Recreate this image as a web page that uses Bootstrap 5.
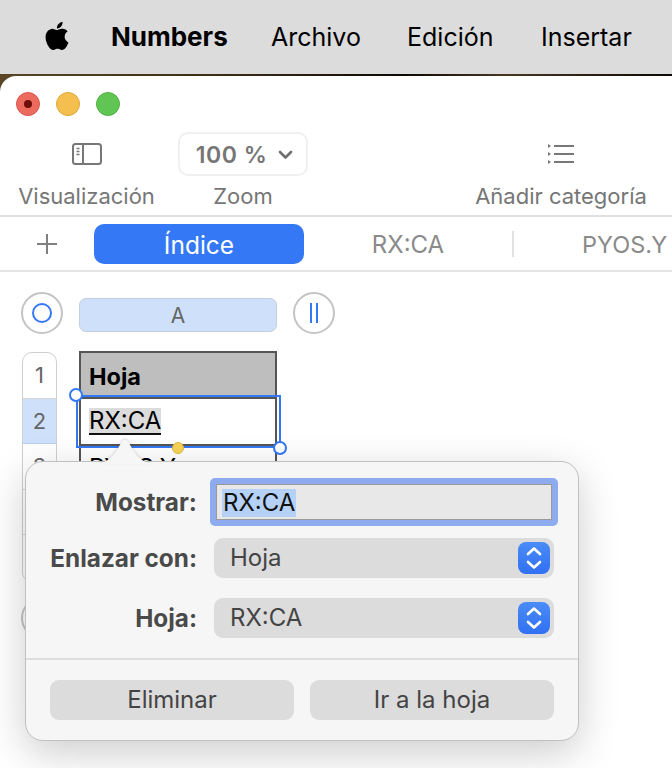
<!DOCTYPE html>
<html lang="es">
<head>
<meta charset="utf-8">
<title>Numbers</title>
<link rel="stylesheet" href="https://cdn.jsdelivr.net/npm/bootstrap@5.3.0/dist/css/bootstrap.min.css">
<style>
html,body{margin:0;background:#fff;}
body{width:672px;height:768px;overflow:hidden;position:relative;font-family:"Inter","Liberation Sans",sans-serif;color:#000;}
.menubar{height:74px;background:#dcdcdc;padding-left:43px;font-size:25px;line-height:1;}
.menubar .apple{width:28px;height:32px;margin-right:40px;margin-top:-3px;}
.menubar .app{font-weight:700;width:160px;font-size:26px;}
.menubar .m1{width:136px;}
.menubar .m2{width:134px;}
.strip{height:3px;background:linear-gradient(90deg,#5a4526 0,#3a2a14 35%,#0c0805 60%,#4a3620 75%,#0c0805 100%);}
.winwrap{background:#5a4526;margin-top:-1px;}
.win{background:#fff;border-top-left-radius:16px;height:692px;}
.lights{height:56px;padding:0 0 0 16px;gap:16px;}
.dot{width:24px;height:24px;border-radius:50%;}
.dot.r{background:#ec6a5e;border:1px solid #d8574c;}
.dot.y{background:#f5bf4f;border:1px solid #dfa73c;}
.dot.g{background:#61c554;border:1px solid #52b046;}
.dot.r::after{content:"";width:8px;height:8px;border-radius:50%;background:#6e0f0a;}
.toolbar{height:85px;border-bottom:2px solid #e0e0e0;font-size:22px;color:#767676;line-height:1;}
.tool1{width:137px;margin-left:18px;}
.tool2{width:130px;margin-left:23px;}
.tool3{width:172px;margin-left:167px;}
.tbtop{height:43px;}
.tblab{margin-top:10px;white-space:nowrap;}
.tblab2{margin-top:9px;white-space:nowrap;}
.zoompill{width:130px;height:44px;border:2px solid #f0f0f0;border-radius:10px;font-size:23px;font-weight:600;color:#767676;gap:11px;padding:2px 0 0 3px;letter-spacing:.5px;}
.tabs{height:55px;border-bottom:2px solid #e4e4e4;font-size:24px;color:#8a8a8a;white-space:nowrap;overflow:hidden;padding-top:1px;}
.plus{width:94px;}
.tabon{width:210px;height:40px;background:#3478f6;color:#fff;border-radius:10px;font-size:24.5px;padding-top:2px;}
.tabb{width:208px;padding-top:2px;}
.tabsep{width:2px;height:26px;background:#e2e2e2;}
.tabc{padding-left:68px;padding-top:2px;font-size:23.5px;}
.sheet{padding:20px 0 0 21px;}
.round{width:42px;height:42px;border-radius:50%;border:2px solid #c4c4c4;background:#fff;flex:none;}
.coltop{gap:16px;height:42px;}
.colhead{width:198px;height:34px;background:#cfe1fa;border:1px solid #c4cedc;border-radius:7px;color:#666;font-size:21px;margin-top:4px;padding-top:2px;}
.rowarea{margin-top:18px;gap:22px;}
.rowheads{width:35px;height:229px;border:1px solid #cfcfcf;border-radius:10px 10px 8px 8px;font-size:22px;color:#666;overflow:hidden;flex:none;margin-left:1px;}
.rowheads div{height:45.5px;border-bottom:1px solid #d4d4d4;padding-top:1px;}
.rowheads .act{background:#cfe1fa;border-bottom-color:#b9d0ee;}
.grid{width:198px;border:2px solid #555;border-bottom:0;margin-top:-1px;font-size:24px;height:230px;}
.grid>div{padding-left:8px;border-bottom:2px solid #555;}
.ghead{height:46px;background:#bebebe;font-weight:700;font-size:23.5px;padding-top:4px;}
.grow{height:47px;}
.grow3{height:46px;}
.linked{background:#dcdcdc;border-bottom:2px solid #111;line-height:26px;height:27px;}
.under{text-decoration:underline;}
.selbox{position:absolute;left:76px;top:395px;width:205px;height:53px;border:2px solid #3478f6;}
.handle{position:absolute;width:14px;height:14px;border-radius:50%;background:#fff;border:2.5px solid #3478f6;}
.h1{left:69px;top:388px;}
.h2{left:273px;top:441px;}
.h3{left:172px;top:442px;width:12px;height:12px;background:#f5d456;border:1px solid #dcb946;}
.lowround{position:absolute;left:21px;top:597px;}
.pop{position:absolute;left:25px;top:461px;width:554px;height:280px;background:#f6f6f6;border-radius:18px;border:1px solid #c0c0c0;box-shadow:0 12px 40px rgba(0,0,0,.2);font-size:24px;color:#444;}
.tail{position:absolute;left:70px;top:-26px;width:58px;height:28px;filter:drop-shadow(0 -1px 1px rgba(0,0,0,.15));}
.frm{padding:16px 0 0 0;}
.lab{width:171px;text-align:right;font-weight:700;font-size:24.3px;color:#4a4a4a;flex:none;white-space:nowrap;}
.frow1{height:48px;}
.inpt{width:348px;height:48px;margin-left:13px;border:6px solid #8fabf0;border-radius:5px;background:#e8e8e8;box-shadow:inset 0 0 0 1px #9a9a9a;color:#111;padding:1px 0 0 6px;}
.seltxt{background:#b5d1f8;line-height:28px;padding:0 1px;}
.frow2{height:40px;margin-top:12px;}
.frow3{height:40px;margin-top:20px;}
.sel{width:340px;height:40px;margin-left:17px;background:#dcdcdc;border-radius:9px;padding:0 4px 0 16px;}
.step{width:32px;height:32px;border-radius:8px;background:linear-gradient(#4a8cf7,#3170f3);}
.sep{height:2px;background:#dedede;margin-top:20px;}
.btns{padding:20px 24px 0 24px;gap:16px;}
.mbtn{width:244px;height:40px;background:#dcdcdc;border-radius:9px;color:#444;}
</style>
</head>
<body>
<div class="menubar d-flex align-items-center">
  <svg class="apple" viewBox="0 0 16 16" fill="#000"><path d="M11.182.008C11.148-.03 9.923.023 8.857 1.18c-1.066 1.156-.902 2.482-.878 2.516.024.034 1.52.087 2.475-1.258.955-1.345.762-2.391.728-2.43Zm3.314 11.733c-.048-.096-2.325-1.234-2.113-3.422.212-2.189 1.675-2.789 1.698-2.854.023-.065-.597-.79-1.254-1.157a3.692 3.692 0 0 0-1.563-.434c-.108-.003-.483-.095-1.254.116-.508.139-1.653.589-1.968.607-.316.018-1.256-.522-2.267-.665-.647-.125-1.333.131-1.824.328-.49.196-1.422.754-2.074 2.237-.652 1.482-.311 3.83-.067 4.56.244.729.625 1.924 1.273 2.796.576.984 1.34 1.667 1.659 1.899.319.232 1.219.386 1.843.067.502-.308 1.408-.485 1.766-.472.357.013 1.061.154 1.782.539.571.197 1.111.115 1.652-.105.541-.221 1.324-1.059 2.238-2.758.347-.79.505-1.217.473-1.282Z"/></svg>
  <span class="app">Numbers</span><span class="m1">Archivo</span><span class="m2">Edición</span><span>Insertar</span>
</div>
<div class="strip"></div>
<div class="winwrap">
<div class="win">
  <div class="lights d-flex align-items-center">
    <span class="dot r d-flex align-items-center justify-content-center"></span><span class="dot y"></span><span class="dot g"></span>
  </div>
  <div class="toolbar d-flex">
    <div class="tool1 text-center">
      <div class="tbtop d-flex align-items-center justify-content-center">
        <svg width="30" height="24" viewBox="0 0 30 24" fill="none" stroke="#777" stroke-width="2"><rect x="1" y="2" width="28" height="20" rx="2.5"/><path d="M11 2v20"/><path d="M4.500 6.500h3M4.500 9.500h3M4.500 12.500h3" stroke-width="1.400"/></svg>
      </div>
      <div class="tblab">Visualización</div>
    </div>
    <div class="tool2 text-center">
      <div class="zoompill d-flex align-items-center justify-content-center"><span>100 %</span>
        <svg width="15" height="10" viewBox="0 0 15 10" fill="none" stroke="#6f6f6f" stroke-width="2.600" stroke-linecap="round" stroke-linejoin="round"><path d="M2 2l5.500 5.500L13 2"/></svg>
      </div>
      <div class="tblab2">Zoom</div>
    </div>
    <div class="tool3 text-center">
      <div class="tbtop d-flex align-items-center justify-content-center">
        <svg width="28" height="22" viewBox="0 0 28 22" fill="#777"><rect x="7" y="2" width="20" height="2"/><rect x="7" y="10" width="20" height="2"/><rect x="7" y="18" width="20" height="2"/><path d="M1 1l3 2-3 2zM1 9l3 2-3 2zM1 17l3 2-3 2z"/></svg>
      </div>
      <div class="tblab">Añadir categoría</div>
    </div>
  </div>
  <div class="tabs d-flex align-items-center">
    <div class="plus d-flex justify-content-center"><svg width="22" height="22" viewBox="0 0 22 22" stroke="#808080" stroke-width="2"><path d="M11 1v20M1 11h20"/></svg></div>
    <div class="tabon d-flex align-items-center justify-content-center">Índice</div>
    <div class="tabb text-center">RX:CA</div>
    <div class="tabsep"></div>
    <div class="tabc">PYOS.Y</div>
  </div>
  <div class="sheet">
    <div class="coltop d-flex align-items-center">
      <div class="round d-flex align-items-center justify-content-center"><svg width="20" height="20" viewBox="0 0 20 20" fill="none" stroke="#3478f6" stroke-width="2"><circle cx="10" cy="10" r="9"/></svg></div>
      <div class="colhead d-flex align-items-center justify-content-center">A</div>
      <div class="round d-flex align-items-center justify-content-center"><svg width="10" height="20" viewBox="0 0 10 20" stroke="#3478f6" stroke-width="2"><path d="M2 0v20M8 0v20"/></svg></div>
    </div>
    <div class="rowarea d-flex">
      <div class="rowheads">
        <div class="d-flex align-items-center justify-content-center">1</div>
        <div class="act d-flex align-items-center justify-content-center">2</div>
        <div class="d-flex align-items-center justify-content-center">3</div>
        <div class="d-flex align-items-center justify-content-center">4</div>
        <div class="d-flex align-items-center justify-content-center">5</div>
      </div>
      <div class="grid">
        <div class="ghead d-flex align-items-center">Hoja</div>
        <div class="grow d-flex align-items-center"><span class="linked">RX:CA</span></div>
        <div class="grow3 d-flex align-items-center"><span class="under">PYOS.Y</span></div>
      </div>
    </div>
  </div>
</div>
</div>
<div class="selbox"></div>
<span class="handle h1"></span><span class="handle h2"></span><span class="handle h3"></span>
<div class="round lowround"></div>
<div class="pop">
  <svg class="tail" viewBox="0 0 58 28"><path d="M0 28C14 27 20 16 25.500 6c1.500-3 5.500-3 7 0C38 16 44 27 58 28z" fill="#f6f6f6"/></svg>
  <div class="frm">
    <div class="frow1 d-flex align-items-center"><span class="lab">Mostrar:</span>
      <div class="inpt d-flex align-items-center"><span class="seltxt">RX:CA</span></div></div>
    <div class="frow2 d-flex align-items-center"><span class="lab">Enlazar con:</span>
      <div class="sel d-flex align-items-center justify-content-between"><span>Hoja</span>
        <span class="step d-flex align-items-center justify-content-center"><svg width="16" height="24" viewBox="0 0 16 24" fill="none" stroke="#fff" stroke-width="2.600" stroke-linecap="round" stroke-linejoin="round"><path d="M2 8l6-5.500L14 8M2 16l6 5.500L14 16"/></svg></span></div></div>
    <div class="frow3 d-flex align-items-center"><span class="lab">Hoja:</span>
      <div class="sel d-flex align-items-center justify-content-between"><span>RX:CA</span>
        <span class="step d-flex align-items-center justify-content-center"><svg width="16" height="24" viewBox="0 0 16 24" fill="none" stroke="#fff" stroke-width="2.600" stroke-linecap="round" stroke-linejoin="round"><path d="M2 8l6-5.500L14 8M2 16l6 5.500L14 16"/></svg></span></div></div>
    <div class="sep"></div>
    <div class="btns d-flex">
      <div class="mbtn d-flex align-items-center justify-content-center">Eliminar</div>
      <div class="mbtn d-flex align-items-center justify-content-center">Ir a la hoja</div>
    </div>
  </div>
</div>
<script src="https://cdn.jsdelivr.net/npm/bootstrap@5.3.0/dist/js/bootstrap.bundle.min.js"></script>
</body>
</html>
